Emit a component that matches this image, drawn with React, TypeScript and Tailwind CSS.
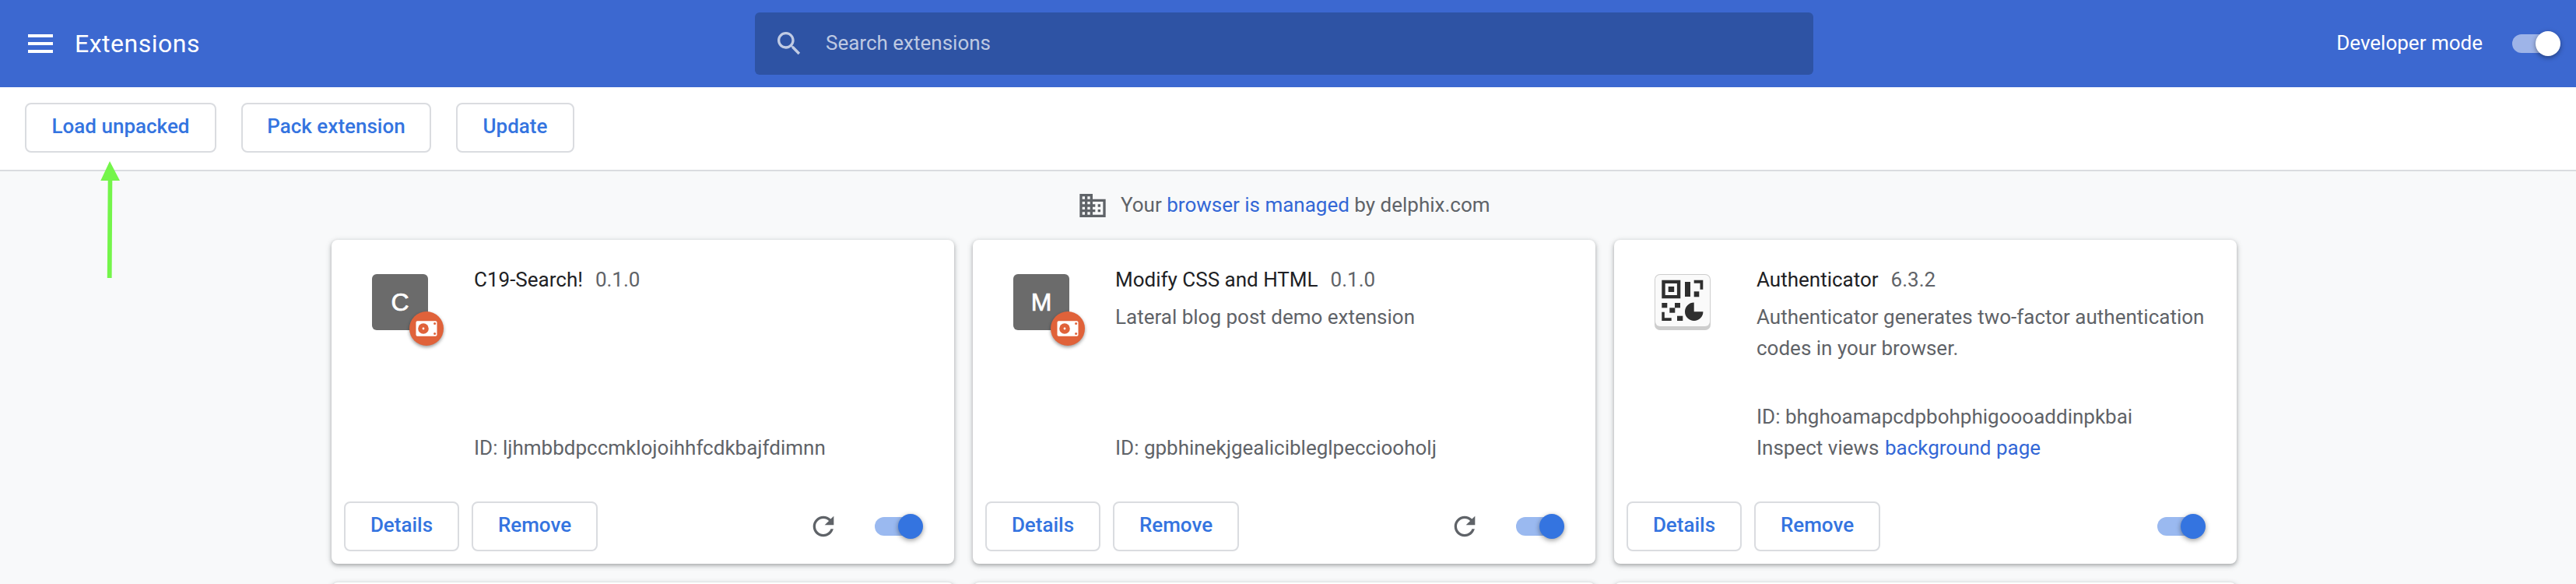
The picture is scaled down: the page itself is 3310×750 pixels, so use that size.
import React from "react";

function Toggle({ light }: { light?: boolean }) {
  return (
    <div className="relative flex h-8 w-[62px] items-center">
      <div className={light ? "h-6 w-14 rounded-full bg-white/50" : "h-6 w-14 rounded-full bg-[#9ab9f0]"} />
      <div
        className={
          light
            ? "absolute right-0 top-0 size-8 rounded-full bg-white shadow-[0_2px_6px_rgba(0,0,0,0.4)]"
            : "absolute right-0 top-0 size-8 rounded-full bg-[#3474e0] shadow-[0_2px_6px_rgba(0,0,0,0.4)]"
        }
      />
    </div>
  );
}

function Button({ children, className }: { children: React.ReactNode; className: string }) {
  return (
    <button
      className={
        "flex h-16 shrink-0 items-center justify-center whitespace-nowrap rounded-lg border-2 border-[#dadce0] bg-white pb-1 text-[26px] font-medium text-[#3474e0] " +
        className
      }
    >
      {children}
    </button>
  );
}

function UnpackedBadge() {
  return (
    <div className="absolute left-12 top-12 size-11 rounded-full bg-[#e0623a] shadow-[0_2px_4px_rgba(0,0,0,0.4)]">
      <svg viewBox="0 0 44 44" className="size-11">
        <rect x="8.5" y="12.3" width="27" height="19.4" rx="1.8" fill="#fff" />
        <circle cx="18" cy="22" r="6.8" fill="#e0623a" />
        <circle cx="18" cy="22" r="1.4" fill="#fff" />
        <circle cx="32.6" cy="15.4" r="1.5" fill="#e0623a" />
        <circle cx="32.6" cy="28.6" r="1.5" fill="#e0623a" />
      </svg>
    </div>
  );
}

function LetterIcon({ letter }: { letter: string }) {
  return (
    <div className="relative flex size-[72px] items-center justify-center rounded-md bg-[#6b6b6b] text-[32px] text-white">
      <span className="font-['Liberation_Sans',sans-serif] [-webkit-text-stroke:0.7px_white]">{letter}</span>
      <UnpackedBadge />
    </div>
  );
}

function QrIcon() {
  return (
    <svg viewBox="0 0 72 72" className="size-[72px]">
      <rect x="0" y="0" width="72" height="72" rx="7" fill="#cdcdcd" />
      <rect x="1" y="1" width="70" height="66" rx="6" fill="#fafafa" />
      <g fill="#2f2f2f">
        <path fillRule="evenodd" d="M9.300 7.700h24v23.600h-24zM13.700 12v15h15.200V12z" />
        <rect x="17.7" y="16" width="7.500" height="7" />
        <rect x="39" y="10" width="7" height="19" />
        <path d="M50.700 7.700h11.600v12h-3.800v-8h-7.800z" />
        <rect x="50.7" y="22.300" width="6.600" height="7" />
        <rect x="9.300" y="37" width="7" height="6.300" />
        <rect x="26" y="37" width="7" height="6.300" />
        <rect x="19.300" y="43.300" width="7" height="6.400" />
        <path d="M9.300 48.700h3.500v7.600h8.900V60H9.300z" />
        <rect x="29" y="53.700" width="7.300" height="6.300" />
        <path d="M50.700 36.600v11.700h11.700a11.700 11.700 0 1 1-11.700-11.700z" />
      </g>
    </svg>
  );
}

interface Extension {
  name: string;
  version: string;
  description?: string;
  id: string;
  icon: React.ReactNode;
  reload?: boolean;
  inspect?: boolean;
}

const cardShell = "rounded-lg bg-white shadow-[0_2px_4px_rgba(60,64,67,0.3),0_2px_6px_2px_rgba(60,64,67,0.15)]";

function Card({ ext }: { ext: Extension }) {
  return (
    <div className={"flex h-[416px] flex-col " + cardShell}>
      <div className="flex h-[320px] pl-[52px] pr-8 pt-[31px]">
        <div className="w-[131px] shrink-0 pt-[13px]">{ext.icon}</div>
        <div className="flex flex-1 flex-col leading-10">
          <div className="flex gap-4">
            <span className="text-[#202124]">{ext.name}</span>
            <span>{ext.version}</span>
          </div>
          <p className="mt-2">{ext.description}</p>
          <div className="mt-auto flex flex-col pb-[33px]">
            <span>ID: {ext.id}</span>
            {ext.inspect && (
              <span>
                Inspect views <a className="ml-px text-[#3367d6]">background page</a>
              </span>
            )}
          </div>
        </div>
      </div>
      <div className="flex h-24 items-center gap-4 pl-4 pr-10">
        <Button className="w-[148px]">Details</Button>
        <Button className="w-[162px]">Remove</Button>
        <div className="ml-auto flex items-center gap-[46px]">
          {ext.reload && (
            <svg viewBox="0 0 24 24" className="size-10" fill="#5f6368">
              <path d="M17.65 6.35C16.2 4.9 14.21 4 12 4c-4.42 0-7.99 3.58-7.99 8s3.57 8 7.99 8c3.73 0 6.84-2.55 7.73-6h-2.08c-.82 2.33-3.04 4-5.65 4-3.31 0-6-2.69-6-6s2.69-6 6-6c1.66 0 3.14.69 4.22 1.78L13 11h7V4l-2.35 2.35z" />
            </svg>
          )}
          <Toggle />
        </div>
      </div>
    </div>
  );
}

const extensions: Extension[] = [
  {
    name: "C19-Search!",
    version: "0.1.0",
    id: "ljhmbbdpccmklojoihhfcdkbajfdimnn",
    icon: <LetterIcon letter="C" />,
    reload: true,
  },
  {
    name: "Modify CSS and HTML",
    version: "0.1.0",
    description: "Lateral blog post demo extension",
    id: "gpbhinekjgealicibleglpecciooholj",
    icon: <LetterIcon letter="M" />,
    reload: true,
  },
  {
    name: "Authenticator",
    version: "6.3.2",
    description: "Authenticator generates two-factor authentication codes in your browser.",
    id: "bhghoamapcdpbohphigoooaddinpkbai",
    icon: <QrIcon />,
    inspect: true,
  },
];

export default function App() {
  return (
    <div className="relative h-[750px] w-[3310px] overflow-hidden bg-[#f8f9fa] font-[Roboto,sans-serif] text-[26px] text-[#5f6368]">
      <header className="flex h-28 items-center bg-[#3c68d0] text-white">
        <div className="flex w-[970px] items-center gap-7 pl-9">
          <svg viewBox="0 0 32 24" className="h-6 w-8" fill="#fff">
            <path d="M0 0h32v4H0zM0 10h32v4H0zM0 20h32v4H0z" />
          </svg>
          <h1 className="text-[32px] leading-10 tracking-[0.5px]">Extensions</h1>
        </div>
        <div className="flex h-20 w-[1360px] items-center gap-[27px] rounded-md bg-[#2e53a4] pl-6 text-white/70">
          <svg viewBox="0 0 24 24" className="size-10" fill="currentColor">
            <path d="M15.5 14h-.79l-.28-.27C15.41 12.59 16 11.11 16 9.5 16 5.91 13.09 3 9.5 3S3 5.91 3 9.5 5.91 16 9.5 16c1.61 0 3.09-.59 4.23-1.57l.27.28v.79l5 4.99L20.49 19l-4.99-5zm-6 0C7.01 14 5 11.99 5 9.5S7.01 5 9.5 5 14 7.01 14 9.5 11.99 14 9.5 14z" />
          </svg>
          <span className="pb-[2px]">Search extensions</span>
        </div>
        <div className="ml-auto flex items-center gap-[38px] pr-5">
          <span className="pb-[2px]">Developer mode</span>
          <Toggle light />
        </div>
      </header>
      <div className="flex h-[108px] items-start gap-8 border-b-2 border-[#dadce0] bg-white px-8 pt-5">
        <Button className="w-[246px]">Load unpacked</Button>
        <Button className="w-[244px]">Pack extension</Button>
        <Button className="w-[152px]">Update</Button>
      </div>
      <div className="flex h-[88px] items-center pl-[1384px]">
        <svg viewBox="0 0 24 24" className="size-10" fill="#5f6368">
          <path d="M12 7V3H2v18h20V7H12zM6 19H4v-2h2v2zm0-4H4v-2h2v2zm0-4H4V9h2v2zm0-4H4V5h2v2zm4 12H8v-2h2v2zm0-4H8v-2h2v2zm0-4H8V9h2v2zm0-4H8V5h2v2zm10 12h-8v-2h2v-2h-2v-2h2v-2h-2V9h8v10zm-2-8h-2v2h2v-2zm0 4h-2v2h2v-2z" />
        </svg>
        <span className="pb-[2px] pl-4">
          Your <a className="text-[#3367d6]">browser is managed</a> by delphix.com
        </span>
      </div>
      <div className="grid grid-cols-[800px_800px_800px] gap-6 pl-[426px]">
        {extensions.map((ext) => (
          <Card key={ext.id} ext={ext} />
        ))}
        <div className={"h-[416px] " + cardShell} />
        <div className={"h-[416px] " + cardShell} />
        <div className={"h-[416px] " + cardShell} />
      </div>
      <svg viewBox="0 0 28 152" className="absolute left-[128px] top-[206px] h-[152px] w-7" fill="#74f54a">
        <path d="M13 1 26 26H16.300L15.600 151H9.800L10.700 26H1.300z" />
      </svg>
    </div>
  );
}
